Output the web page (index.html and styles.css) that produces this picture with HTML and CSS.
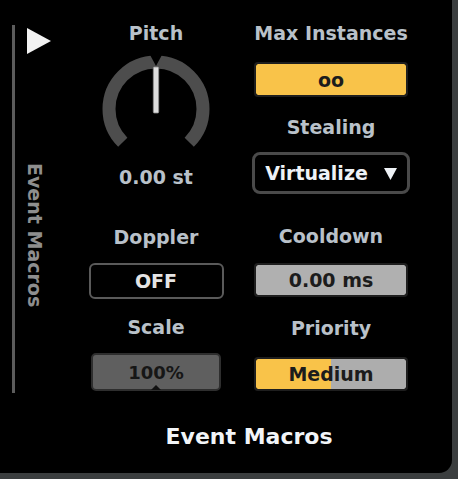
FILE: index.html
```html
<!DOCTYPE html>
<html>
<head>
<meta charset="utf-8">
<link rel="stylesheet" href="styles.css">
</head>
<body>
<div class="panel">
  <aside class="sidebar">
    <div class="rail">
      <svg class="play" width="26" height="26" viewBox="0 0 26 26"><polygon points="1,0 25,13 1,26" fill="#f2f2f2"/></svg>
      <div class="vtitle">Event Macros</div>
    </div>
  </aside>
  <main class="main">
    <div class="grid">
      <div class="col col-left">
        <div class="label l-pitch">Pitch</div>
        <svg class="knob" width="112" height="96" viewBox="0 0 112 96">
          <path d="M 22.77 89.23 A 47 47 0 1 1 89.23 89.23" fill="none" stroke="#4d4d4d" stroke-width="13"/>
          <polygon points="49,0 63,0 56,13" fill="#000"/>
          <rect x="53.3" y="14" width="5.4" height="46" rx="1" fill="#dedede" stroke="#8a8a8a" stroke-width="0.8"/>
        </svg>
        <div class="label l-value">0.00 st</div>
        <div class="label l-doppler">Doppler</div>
        <div class="box box-off">OFF</div>
        <div class="label l-scale">Scale</div>
        <div class="box box-scale">100%<span class="notch"></span></div>
      </div>
      <div class="col col-right">
        <div class="label l-max">Max Instances</div>
        <div class="box box-yellow">oo</div>
        <div class="label l-steal">Stealing</div>
        <div class="box box-drop"><span>Virtualize</span><svg width="13" height="12" viewBox="0 0 13 12"><polygon points="0,0 13,0 6.5,12" fill="#eef2f6"/></svg></div>
        <div class="label l-cool">Cooldown</div>
        <div class="box box-gray">0.00 ms</div>
        <div class="label l-prio">Priority</div>
        <div class="box box-prio">Medium</div>
      </div>
    </div>
    <div class="footer">Event Macros</div>
  </main>
</div>
</body>
</html>
```
FILE: styles.css
```css
html, body {
  margin: 0;
  padding: 0;
}
body {
  background: #3b3e3f;
  width: 458px;
  height: 479px;
  overflow: hidden;
  font-family: "DejaVu Sans", "Open Sans", sans-serif;
  font-weight: 700;
}
.panel {
  width: 452px;
  height: 473px;
  background: #000;
  border-bottom-right-radius: 13px;
  display: flex;
}
.sidebar {
  width: 46px;
  padding-left: 12px;
  box-sizing: border-box;
}
.rail {
  margin-top: 25px;
  height: 368px;
  border-left: 3px solid #5c5c5c;
  padding-left: 11px;
  display: flex;
  flex-direction: column;
}
.play {
  margin-top: 3px;
  display: block;
}
.vtitle {
  writing-mode: vertical-rl;
  margin-top: 109px;
  margin-left: 0;
  color: #8e8e8e;
  font-size: 19px;
  line-height: 22px;
}
.main {
  width: 406px;
  display: flex;
  flex-direction: column;
}
.grid {
  display: grid;
  grid-template-columns: 140px 162px;
  column-gap: 24px;
  padding-left: 40px;
}
.col {
  display: flex;
  flex-direction: column;
  align-items: center;
}
.label {
  color: #b9c1c9;
  font-size: 19px;
  line-height: 20px;
  height: 20px;
  white-space: nowrap;
}
.l-pitch { margin-top: 23px; }
.knob { margin-top: 10px; display: block; }
.l-value { margin-top: 18px; }
.l-doppler { margin-top: 40px; }
.l-scale { margin-top: 18px; }
.l-max { margin-top: 23px; }
.l-steal { margin-top: 20px; }
.l-cool { margin-top: 32px; }
.l-prio { margin-top: 21px; }

.box {
  box-sizing: border-box;
  display: flex;
  align-items: center;
  justify-content: center;
  font-size: 19px;
  color: #1c1c1c;
  white-space: nowrap;
}
.box-off {
  margin-top: 16px;
  width: 135px;
  height: 36px;
  border: 2px solid #5a5a5a;
  border-radius: 6px;
  background: #000;
  color: #e4e4e4;
}
.box-scale {
  position: relative;
  margin-top: 16px;
  width: 130px;
  height: 38px;
  border: 2px solid #2e2e2e;
  border-radius: 5px;
  background: #5f5f5f;
  color: #161616;
  font-size: 18px;
}
.notch {
  position: absolute;
  left: 58px;
  bottom: -1px;
  width: 0;
  height: 0;
  border-left: 5px solid transparent;
  border-right: 5px solid transparent;
  border-bottom: 5px solid #111;
}
.box-yellow {
  margin-top: 19px;
  width: 154px;
  height: 35px;
  border: 2px solid #1e1e1e;
  border-radius: 4px;
  background: #f9c349;
  background-clip: padding-box;
}
.box-drop {
  margin-top: 15px;
  width: 158px;
  height: 42px;
  border: 3px solid #4a4a4a;
  border-radius: 8px;
  background: #000;
  color: #eef2f6;
  gap: 16px;
}
.box-drop svg { display: block; margin-top: 1px; }
.box-gray {
  margin-top: 17px;
  width: 154px;
  height: 34px;
  border: 2px solid #1e1e1e;
  border-radius: 4px;
  background: #b0b0b0;
  background-clip: padding-box;
}
.box-prio {
  margin-top: 19px;
  width: 154px;
  height: 34px;
  border: 2px solid #1e1e1e;
  border-radius: 4px;
  background: linear-gradient(to right, #f9c349 50%, #adadad 50%);
  background-clip: padding-box;
}
.footer {
  margin-top: 34px;
  text-align: center;
  color: #f2f5f8;
  font-size: 22px;
  line-height: 24px;
}
```
